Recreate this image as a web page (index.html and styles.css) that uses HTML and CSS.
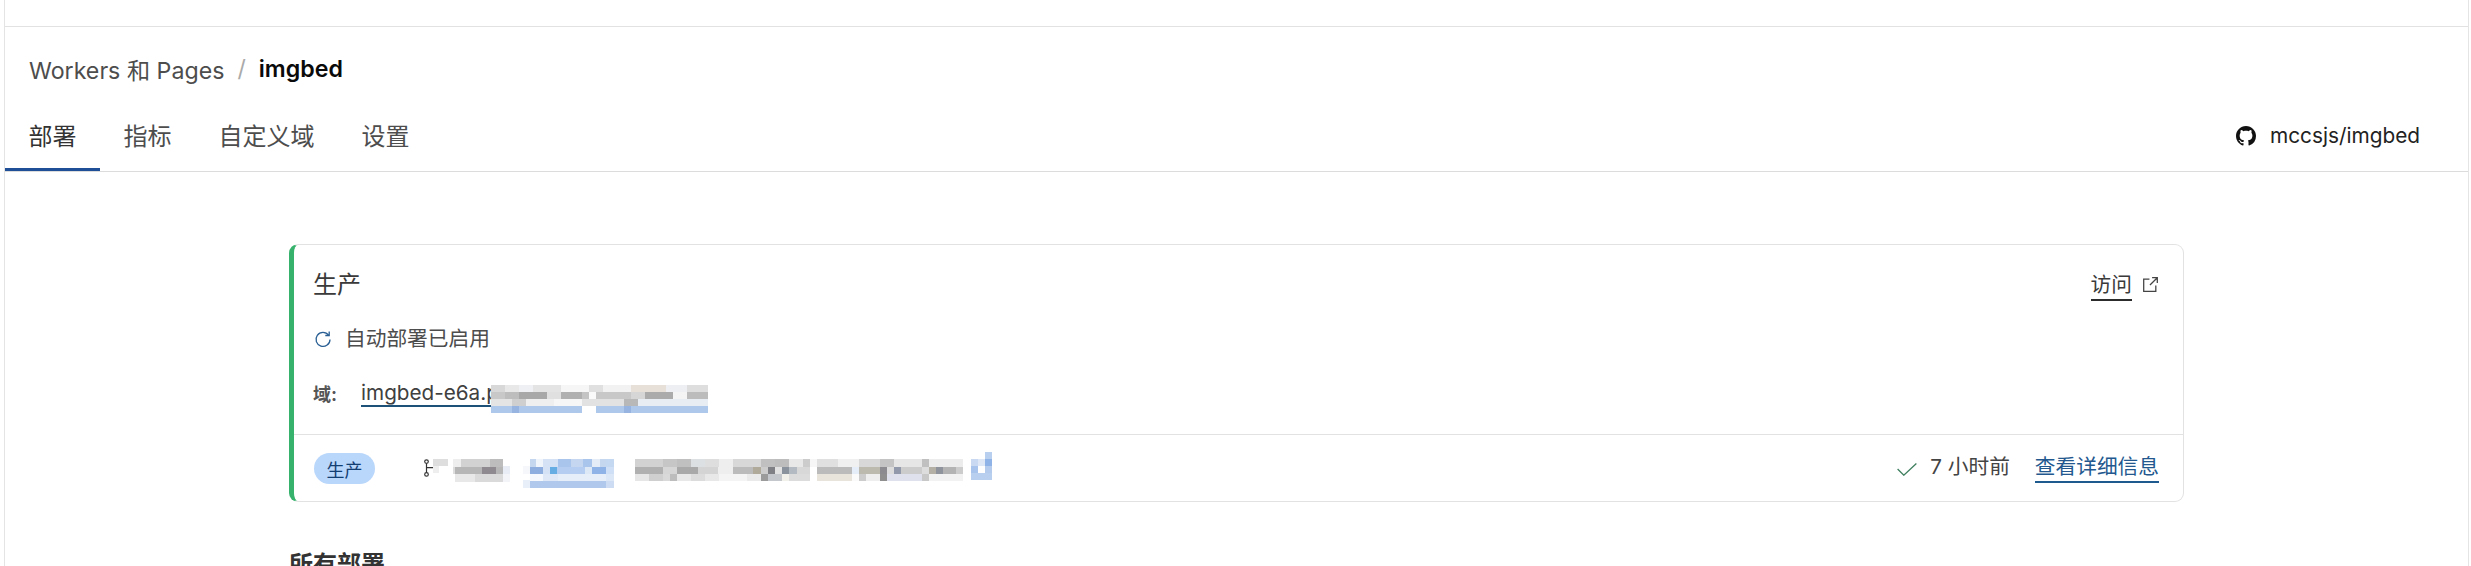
FILE: index.html
```html
<!DOCTYPE html>
<html lang="zh-CN">
<head>
<meta charset="utf-8">
<title>imgbed</title>
<link rel="stylesheet" href="styles.css">
</head>
<body>
<div class="shell">
  <div class="topbar"></div>
  <header class="head">
    <div class="crumbs"><span class="crumb">Workers 和 Pages</span><span class="sep">/</span><strong class="current">imgbed</strong></div>
    <nav class="tabs">
      <a class="tab active">部署</a>
      <a class="tab">指标</a>
      <a class="tab">自定义域</a>
      <a class="tab">设置</a>
      <a class="repo">
        <svg class="gh" viewBox="0 0 16 16" aria-hidden="true"><path fill="#111" d="M8 0C3.58 0 0 3.58 0 8c0 3.54 2.29 6.53 5.47 7.59.4.07.55-.17.55-.38 0-.19-.01-.82-.01-1.49-2.01.37-2.53-.49-2.69-.94-.09-.23-.48-.94-.82-1.13-.28-.15-.68-.52-.01-.53.63-.01 1.08.58 1.23.82.72 1.21 1.87.87 2.33.66.07-.52.28-.87.51-1.07-1.78-.2-3.64-.89-3.64-3.95 0-.87.31-1.59.82-2.15-.08-.2-.36-1.02.08-2.12 0 0 .67-.21 2.2.82.64-.18 1.32-.27 2-.27s1.36.09 2 .27c1.53-1.04 2.2-.82 2.2-.82.44 1.1.16 1.92.08 2.12.51.56.82 1.27.82 2.15 0 3.07-1.87 3.75-3.65 3.95.29.25.54.73.54 1.48 0 1.07-.01 1.93-.01 2.2 0 .21.15.46.55.38A8.01 8.01 0 0 0 16 8c0-4.42-3.58-8-8-8z"/></svg>
        <span>mccsjs/imgbed</span>
      </a>
    </nav>
  </header>
  <main class="main">
    <section class="card">
      <div class="card-top">
        <div class="title-row">
          <h2 class="title">生产</h2>
          <a class="visit"><span class="visit-text">访问</span>
            <svg class="ext" viewBox="0 0 16 16" aria-hidden="true"><path fill="none" stroke="#444" stroke-width="1.2" d="M7 3H1.6v11.4H13V9M9.5 1.6h4.9v4.9M14.4 1.6L7.5 8.5"/></svg>
          </a>
        </div>
        <div class="auto">
          <svg class="sync" viewBox="0 0 18 18" aria-hidden="true"><path fill="none" stroke="#2a5f94" stroke-width="1.3" d="M14.6 5.2A7 7 0 1 0 16 9.4"/><path fill="none" stroke="#2a5f94" stroke-width="1.3" d="M15.2 1.6v3.9h-3.9"/></svg>
          <span>自动部署已启用</span>
        </div>
        <div class="domain">
          <span class="domain-label">域:</span>
          <a class="domain-link">imgbed-e6a.p</a><span class="mosaic m-domain"></span>
        </div>
      </div>
      <div class="card-foot">
        <span class="badge">生产</span>
        <svg class="branch" viewBox="0 0 10 18" aria-hidden="true"><g fill="none" stroke="#333" stroke-width="1.2"><circle cx="2.5" cy="2.6" r="1.8"/><circle cx="2.5" cy="15.4" r="1.8"/><path d="M2.5 4.4v9.2M2.5 8.6H9"/></g></svg>
        <span class="mosaic m-branch-a"></span>
        <span class="mosaic m-branch"></span>
        <span class="mosaic m-commit"></span>
        <span class="mosaic m-url"></span>
        <span class="mosaic m-copy"></span>
        <span class="foot-right">
          <svg class="check" viewBox="0 0 20 13" aria-hidden="true"><path fill="none" stroke="#3f7f5f" stroke-width="1.3" d="M.6 6l6.2 6.2L19.4.6"/></svg>
          <span class="ago">7 小时前</span>
          <a class="details">查看详细信息</a>
        </span>
      </div>
    </section>
    <h3 class="all">所有部署</h3>
  </main>
</div>
</body>
</html>
```
FILE: styles.css
```css
* { box-sizing: border-box; }
html, body { margin: 0; height: 100%; overflow: hidden; background: #fff; }
body { font-family: Inter, "Noto Sans CJK SC", sans-serif; color: #404040; }

.shell {
  margin: 0 2px 0 4px;
  height: 566px;
  border-left: 1px solid #e4e4e4;
  border-right: 1px solid #e4e4e4;
  overflow: hidden;
}
.topbar { height: 27px; border-bottom: 1px solid #e2e2e2; }

.head { border-bottom: 1px solid #dcdcdc; height: 145px; padding-top: 25px; }
.crumbs { display: flex; align-items: center; height: 34px; padding-left: 24px; font-size: 23.2px; }
.crumb { color: #4d4d4d; }
.sep { color: #aaa; margin: 0 13px; }
.current { color: #0a0a0a; font-weight: 600; }

.tabs { display: flex; align-items: stretch; height: 62px; margin-top: 23px; }
.tab { display: flex; align-items: center; padding: 0 23.5px 12px; font-size: 24px; color: #4d4d4d; height: 62px; }
.tab.active { color: #333; border-bottom: 3px solid #1f4f96; padding-bottom: 9px; }
.repo { margin-left: auto; display: flex; align-items: center; gap: 14px; padding-right: 48px; font-size: 20.8px; color: #222; padding-bottom: 9px; }
.gh { width: 20px; height: 20px; }

.main { width: 1895px; margin: 72px auto 0; }
.card {
  height: 258px;
  border: 1px solid #e2e2e2;
  border-left: 5px solid #37b26c;
  border-radius: 9px;
  background: #fff;
}
.card-top { height: 189px; padding: 0 0 0 20px; }
.title-row { display: flex; justify-content: space-between; align-items: flex-start; padding-top: 22px; }
.title { margin: 0; font-size: 24px; line-height: 36px; font-weight: 400; color: #3a3a3a; margin-left: -1px; }
.visit { display: flex; align-items: flex-start; gap: 10px; padding-right: 24px; font-size: 20.7px; color: #3a3a3a; margin-top: 1px; }
.visit-text { border-bottom: 2px solid #2c2c2c; line-height: 33px; height: 33px; }
.ext { width: 17px; height: 17px; margin-top: 8px; }

.auto { display: flex; align-items: center; gap: 13px; margin-top: 21px; font-size: 20.7px; line-height: 30px; color: #4d4d4d; }
.sync { width: 18px; height: 18px; }

.domain { display: flex; align-items: flex-start; margin-top: 26px; height: 34px; }
.domain-label { font-size: 18px; line-height: 30px; font-weight: 700; color: #555; width: 47px; margin-left: -1px; margin-right: 1px; }
.domain-link { font-size: 20.7px; line-height: 26px; height: 27px; width: 130px; white-space: nowrap; color: #404040; border-bottom: 2px solid #1d5178; }

.card-foot {
  display: flex;
  align-items: flex-start;
  height: 67px;
  border-top: 1px solid #e2e2e2;
  padding-left: 20px;
}
.badge {
  margin-top: 18px;
  width: 61px; height: 31px;
  display: flex; align-items: center; justify-content: center;
  border-radius: 16px;
  background: #b9d6fb;
  color: #123e72;
  font-size: 18px;
}
.branch { width: 10px; height: 18px; margin: 24px 0 0 49px; }
.foot-right { margin-left: auto; display: flex; align-items: flex-start; padding-right: 24px; font-size: 20.7px; }
.check { width: 20px; height: 13px; margin-top: 28px; }
.ago { margin: 17px 0 0 13px; line-height: 30px; color: #444; }
.details { margin: 15px 0 0 25px; line-height: 34px; height: 33px; color: #23588f; border-bottom: 2px solid #1f5a8f; }

.all { margin: 45px 0 0; font-size: 24px; line-height: 36px; font-weight: 700; color: #333; }

.mosaic { display: block; background-repeat: no-repeat; flex: none; }

.m-domain {
  width: 217px; height: 28px; margin-top: 5px;
  background-image:
    linear-gradient(90deg, #d8d8d8 0 14px, #e8e8e8 14px 28px, #eef0f3 28px 42px, #e4e4e4 42px 70px, #f6f6f6 70px 98px, #e0e0e0 98px 112px, #f2f2f2 112px 140px, #e6e0d8 140px 175px, #eeeff3 175px 196px, #dedede 196px 217px),
    linear-gradient(90deg, #c8c8c8 0 14px, #bdbdbd 14px 28px, #a8a8a8 28px 56px, #e0e0e0 56px 70px, #b0b0b0 70px 91px, #c4c4c4 91px 98px, #fafafa 98px 105px, #c8c8c8 105px 140px, #d6d6d6 140px 154px, #ababab 154px 182px, #f4f4f4 182px 196px, #bcbcbc 196px 217px),
    linear-gradient(90deg, #e4e4e4 0 21px, #cfcfcf 21px 35px, #efefef 35px 63px, #f6f6f6 63px 91px, #e2e2e2 91px 133px, #b8b8b8 133px 147px, #e8ecf3 147px 217px),
    linear-gradient(90deg, #aec8ec 0 21px, #96b4df 21px 28px, #aec8ec 28px 91px, #fff 91px 105px, #aec8ec 105px 133px, #96b4df 133px 140px, #aec8ec 140px 217px);
  background-size: 100% 7px;
  background-position: 0 0, 0 7px, 0 14px, 0 21px;
}
.m-branch-a {
  width: 15px; height: 14px; margin: 24px 0 0 -1px;
  background-image:
    linear-gradient(90deg, #dedede 0 15px),
    linear-gradient(90deg, #eee 0 6px, transparent 6px);
  background-size: 100% 7px;
  background-position: 0 0, 0 7px;
}
.m-branch {
  width: 57px; height: 23px; margin: 24px 0 0 5px;
  background-image:
    linear-gradient(90deg, #eee 0 8px, #d2d2d2 8px 37px, #bdbdbd 37px 50px, transparent 50px),
    linear-gradient(90deg, #ddd 0 2px, #b6b6b6 2px 29px, #8f8a90 29px 43px, #b6b6b6 43px 50px, #e8edf5 50px 57px),
    linear-gradient(90deg, transparent 0 2px, #e8e8e8 2px 22px, #dadada 22px 50px, #f2f4f8 50px 57px);
  background-size: 100% 8px;
  background-position: 0 0, 0 7px, 0 15px;
}
.m-commit {
  width: 91px; height: 29px; margin: 24px 0 0 13px;
  background-image:
    linear-gradient(90deg, transparent 0 7px, #c5d6ef 7px 13px, #f0f4fb 13px 20px, #d5e2f5 20px 35px, #a9c5ec 35px 48px, #c5d6f0 48px 60px, #a9c5ec 60px 69px, #e4ecf8 69px 77px, #c5d6ef 77px 83px, #c5d8f2 83px 91px),
    linear-gradient(90deg, #f5f7fb 0 7px, #8eaee0 7px 20px, #d5e2f5 20px 27px, #66ade3 27px 34px, #b5cdf0 34px 62px, #dde8f7 62px 69px, #8fb3e6 69px 83px, #cfdff5 83px 91px),
    linear-gradient(90deg, transparent 0 7px, #f5f8fc 7px 20px, #dfe8f6 20px 35px, #e6eef9 35px 83px, #dbe6f6 83px 91px),
    linear-gradient(90deg, #e8eff9 0 7px, #afc8ec 7px 83px, #cddcf3 83px 91px);
  background-size: 100% 8px;
  background-position: 0 0, 0 7px, 0 14px, 0 21px;
}
.m-url {
  width: 328px; height: 22px; margin: 24px 0 0 21px;
  background-image:
    linear-gradient(90deg, #d2d2d2 0 28px, #c6c6c6 28px 42px, #c0c0c0 42px 56px, #dce0e2 56px 70px, #dedede 70px 84px, #eee 84px 98px, #d8d8d8 98px 126px, #c0c0c0 126px 140px, #bdbdbd 140px 154px, #e8e8e8 154px 168px, #ccc 168px 175px, #f6f6f6 175px 182px, #e0e0e0 182px 203px, #f0f0f0 203px 224px, #d8d8d8 224px 245px, #c4c4c4 245px 259px, #e6e6e6 259px 287px, #c0c0c0 287px 294px, #ececec 294px 328px),
    linear-gradient(90deg, #b0b0b0 0 28px, #d6d6d6 28px 42px, #a9a9a9 42px 63px, #d4d4d4 63px 83px, #eee 83px 98px, #bbb 98px 118px, #b0aa9a 118px 126px, #ccc 126px 133px, #7f8085 133px 140px, #e2e2e2 140px 147px, #8a929e 147px 154px, #b4bac2 154px 162px, #d8d8d8 162px 175px, #fff 175px 182px, #bbb 182px 217px, #e5eef8 217px 224px, #bcb9ae 224px 245px, #8b8b90 245px 252px, #ddd 252px 259px, #9299aa 259px 266px, #ccc 266px 287px, #ddd 287px 294px, #b5b0a5 294px 301px, #8f949c 301px 308px, #b3b3b3 308px 321px, #ccc 321px 328px),
    linear-gradient(90deg, #e6e6e6 0 14px, #cfcfcf 14px 28px, #d9d9d9 28px 35px, #bdbdbd 35px 42px, #e8e8e8 42px 56px, #dcdcdc 56px 70px, #e8e8e8 70px 84px, #f4f4f4 84px 112px, #eaeaea 112px 126px, #9b9b9b 126px 133px, #c4c8cc 133px 147px, #f2f0ea 147px 154px, #dcdcdc 154px 175px, #fff 175px 182px, #e8e4dc 182px 217px, #fafafa 217px 224px, #ccc 224px 231px, #eee 231px 245px, #8f8f8f 245px 252px, #dfe2ec 252px 287px, #c8c8c8 287px 294px, #f2f2f2 294px 328px);
  background-size: 100% 8px;
  background-position: 0 0, 0 7px, 0 14px;
}
.m-copy {
  width: 21px; height: 28px; margin: 17px 0 0 8px;
  background-image:
    linear-gradient(90deg, transparent 0 14px, #b9cff0 14px 21px),
    linear-gradient(90deg, #c9d9f2 0 7px, #dde7f6 7px 14px, #8fb3e6 14px 21px),
    linear-gradient(90deg, #a9c4ec 0 7px, #fff 7px 14px, #b5cbee 14px 21px),
    linear-gradient(90deg, #b9cff0 0 21px);
  background-size: 100% 7px;
  background-position: 0 0, 0 7px, 0 14px, 0 21px;
}
```
